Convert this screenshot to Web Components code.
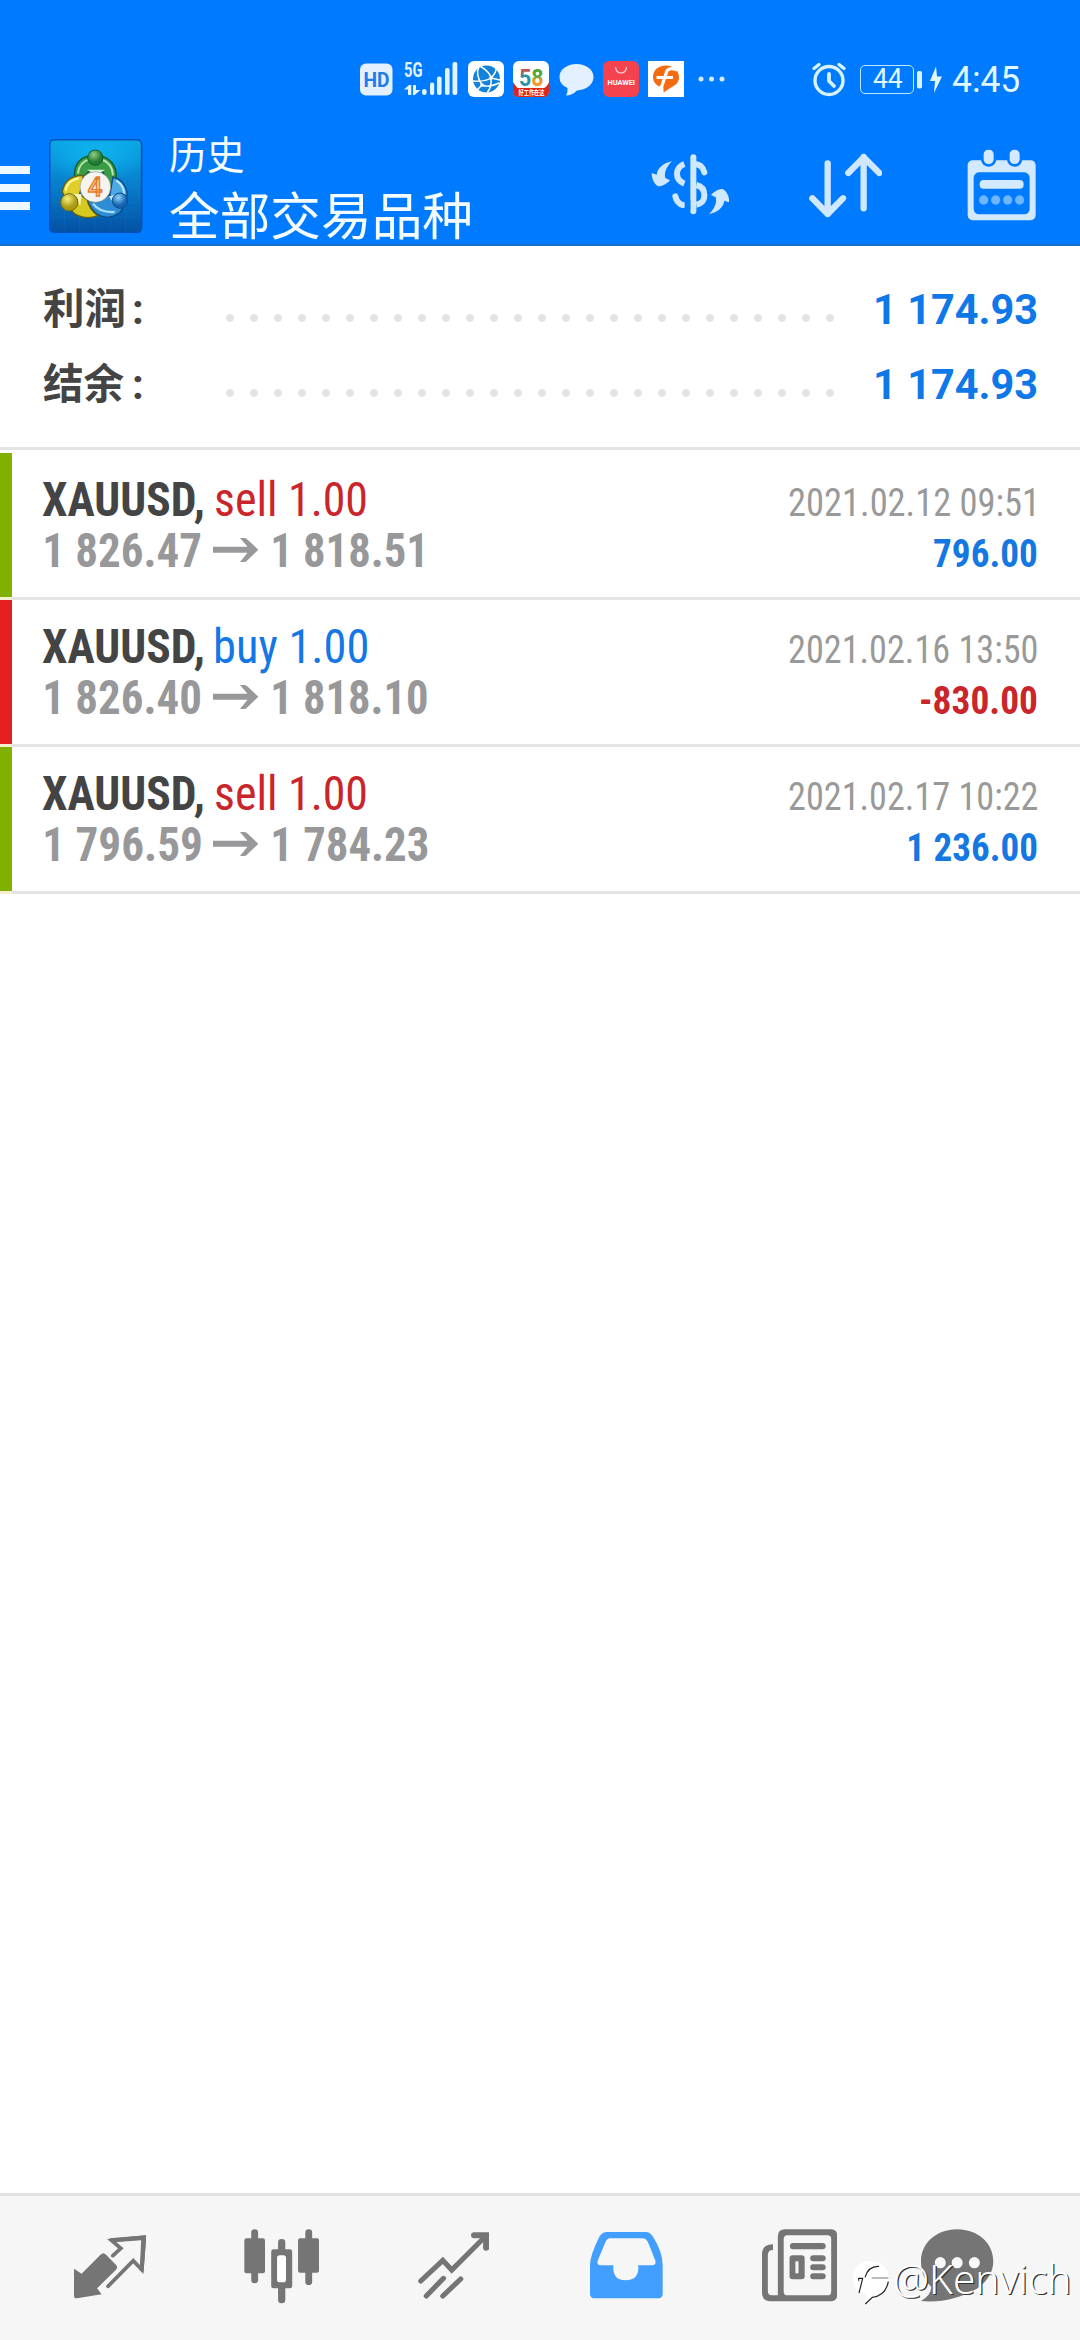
<!DOCTYPE html>
<html lang="zh-CN">
<head>
<meta charset="utf-8">
<title>历史</title>
<style>
html,body{margin:0;background:#fff}
body{width:1080px;height:2340px;overflow:hidden;font-family:Roboto,"Noto Sans CJK SC",sans-serif}
</style>
</head>
<body>
<history-app></history-app>
<script>
const define=(name,html,init)=>customElements.define(name,class extends HTMLElement{
  connectedCallback(){
    if(!this.shadowRoot){
      const t=document.createElement('template');
      t.innerHTML=typeof html==='function'?html(this):html;
      this.attachShadow({mode:'open'}).append(t.content.cloneNode(true));
    }
    if(init)init(this);
  }
});

/* Sets its text in a box whose width is the ink width given in "w". */
const pen=document.createElement('canvas').getContext('2d');
define('fit-text',`<style>:host{display:block;flex:none;white-space:pre}span{display:inline-block;transform-origin:0 0}</style><span><slot></slot></span>`,el=>{
  const c=getComputedStyle(el),w=+el.getAttribute('w');
  pen.font=`${c.fontWeight} ${c.fontSize} ${c.fontFamily}`;
  const m=pen.measureText(el.textContent);
  const s=w/(m.actualBoundingBoxLeft+m.actualBoundingBoxRight);
  el.style.width=w+'px';
  el.shadowRoot.querySelector('span').style.transform=`translateX(${m.actualBoundingBoxLeft*s}px) scaleX(${s})`;
});

define('status-bar',`<style>
:host{display:flex;height:120px;box-sizing:border-box;padding:61px 0 0 360px;align-items:flex-start;color:#e2f8ff}
svg{flex:none;display:block;height:36px;overflow:visible}
fit-text{line-height:36px}
.bat{box-sizing:border-box;width:54px;height:29px;border:1.5px solid #bfe6ff;border-radius:5px;margin:4px 0 0 14px;padding-left:11.5px;font-size:27px}
.bat fit-text{line-height:26px}
.time{font-size:37px;margin:1px 0 0 10px}
</style>
<svg width="33" viewBox="0 0 33 36"><rect y="2.5" width="32.5" height="32" rx="6" fill="#e3f0ff"/><text x="3.5" y="26" font-family="Roboto" font-weight="700" font-size="20" textLength="26" lengthAdjust="spacingAndGlyphs" fill="#1f7be8">HD</text></svg>
<svg width="54" viewBox="0 0 54 36" style="margin-left:11px"><text x="0" y="15.5" font-family="Roboto" font-weight="700" font-size="20" textLength="18.500" lengthAdjust="spacingAndGlyphs" fill="#e3f3ff">5G</text><g fill="#e3f3ff"><rect x="18" y="28" width="4.6" height="6" rx="2.2"/><rect x="26" y="21.5" width="4.2" height="12.5" rx="2"/><rect x="33" y="15.500" width="4.600" height="18.500" rx="2"/><rect x="41" y="7" width="4.600" height="27" rx="2"/><rect x="48.500" y="1" width="4.800" height="33" rx="2"/><path d="M0 28.500l5-4.500h2.300v10H4V28.500ZM9 24h3v5H16.500L10.600 34H9Z"/></g></svg>
<svg width="36" viewBox="0 0 36 36" style="margin-left:9.500px"><rect width="36" height="36" rx="6" fill="#fff"/><circle cx="18.500" cy="18" r="13.500" fill="#1282dd"/><g fill="none" stroke="#fff" stroke-width="1.500"><path d="M12 5Q22 11 23 17Q24 26 19 32M5 20Q17 21 23 17Q28 12 28 8M11 6Q7 13 14 24Q20 27 31 22M14 24L9 29M23 17L32 19"/></g><circle cx="23" cy="17" r="1.800" fill="#fff"/><circle cx="14" cy="24" r="1.800" fill="#fff"/></svg>
<svg width="36" viewBox="0 0 36 36" style="margin-left:9px"><defs><linearGradient id="d" x2="0" y2="1"><stop offset=".2" stop-color="#e2483a"/><stop offset=".45" stop-color="#2b93a8"/></linearGradient><linearGradient id="e" x2="0" y2="1"><stop offset=".45" stop-color="#55a63a"/><stop offset=".6" stop-color="#f29a26"/></linearGradient></defs><rect width="36" height="36" rx="6" fill="#fff"/><text x="6" y="24.500" font-family="Roboto" font-weight="700" font-size="24" textLength="24.500" lengthAdjust="spacingAndGlyphs"><tspan fill="url(#d)">5</tspan><tspan fill="url(#e)">8</tspan></text><path d="M0 21Q4 27 5 27h26q3-1 5-6v9q0 6-6 6H6q-6 0-6-6Z" fill="#dc2419"/><text x="5.500" y="34" font-family="Noto Sans CJK SC" font-weight="700" font-size="7" textLength="26" lengthAdjust="spacingAndGlyphs" fill="#fff">好工作在这</text></svg>
<svg width="35" viewBox="0 0 35 36" style="margin-left:10.500px"><path d="M17.500 3C27 3 34.500 8.500 34.500 16S27 29 18 29.500Q13 34.500 7 34.500Q9 31 8.500 27Q.5 23.500.5 16C.5 8.500 8 3 17.500 3Z" fill="#e3f0ff"/></svg>
<svg width="36" viewBox="0 0 36 36" style="margin-left:8.500px"><rect width="36" height="36" rx="6" fill="#f4434e"/><path d="M12.500 6q.5 6 5.500 6t5.500-6" fill="none" stroke="#ffd9dc" stroke-width="1.200"/><text x="4.500" y="23.500" font-family="Roboto" font-weight="700" font-size="6.500" textLength="27.500" lengthAdjust="spacingAndGlyphs" fill="#fff">HUAWEI</text></svg>
<svg width="36" viewBox="0 0 36 36" style="margin-left:9px"><path fill="#fff" d="M0 0h36v36H0z"/><path d="M18 4.500C26 4.500 31 10 31 16.500C31 22 27 24.500 23 26.500L15.500 31.500V26.500C9 26 5 21 5 16C5 9.500 10 4.500 18 4.500Z" fill="#f36c12"/><path d="M29 9Q19 5 18 13L12.500 29M8.500 16.500H25" fill="none" stroke="#fff" stroke-width="3.200"/></svg>
<svg width="27" viewBox="0 0 27 36" style="margin-left:14px"><g fill="#d6ebff"><circle cx="3" cy="18" r="2.500"/><circle cx="13.500" cy="18" r="2.500"/><circle cx="24" cy="18" r="2.500"/></g></svg>
<svg width="34" viewBox="0 0 34 36" style="margin-left:87.500px"><g fill="none" stroke="#d6f3ff" stroke-width="3.400" stroke-linecap="round"><circle cx="17" cy="19.500" r="14"/><path d="M2 7.500L7 3.500M27 3.500L32 7.500"/><path d="M17 13v7l5 5" stroke-width="3.800" stroke-linejoin="round"/></g></svg>
<div class="bat"><fit-text w="29.500">44</fit-text></div>
<svg width="5" viewBox="0 0 5 36" style="margin-left:3px"><rect y="10" width="5" height="17.500" rx="1.800" fill="#d6f3ff"/></svg>
<svg width="12" viewBox="0 0 12 36" style="margin-left:7.500px"><path d="M6 5.500L0 20H5L4 32L12 15.500H7Z" fill="#e2f8ff"/></svg>
<div class="time"><fit-text w="67.500">4:45</fit-text></div>`);

define('title-bar',`<style>
:host{display:flex;align-items:flex-start;height:126px;box-sizing:border-box;border-bottom:2.500px solid #1a6fcd;color:#f4fcff}
svg{display:block;flex:none}
.menu{display:flex;flex-direction:column;gap:10px;padding-top:46px;width:30px}
.menu i{height:8px;background:#eef8ff}
.logo{margin:18.700px 0 0 19.300px}
.t{padding-top:14px;margin-left:27.300px;width:300px}
.a{font-size:38.500px;line-height:44px}.b{font-size:51px;line-height:60px;margin-top:10px}
.act{display:flex;padding-top:26.700px;margin-left:180.700px}
</style>
<div class="menu"><i></i><i></i><i></i></div>
<svg class="logo" width="93.300" height="94" viewBox="148 56 280 282">
<defs><linearGradient id="bg" x2="0" y2="1"><stop stop-color="#08a5e6"/><stop offset=".5" stop-color="#087dcb"/><stop offset="1" stop-color="#0451a4"/></linearGradient>
<radialGradient id="gl" cx=".5" cy=".25" r=".6"><stop stop-color="#10b4ee"/><stop offset="1" stop-color="#10b4ee" stop-opacity="0"/></radialGradient>
<radialGradient id="g" cx=".4" cy=".3"><stop stop-color="#8fce86"/><stop offset="1" stop-color="#237a33"/></radialGradient>
<radialGradient id="y" cx=".4" cy=".3"><stop stop-color="#fbf07c"/><stop offset="1" stop-color="#a89a14"/></radialGradient>
<radialGradient id="b" cx=".4" cy=".3"><stop stop-color="#8fd4fa"/><stop offset="1" stop-color="#1565b4"/></radialGradient></defs>
<rect x="150" y="58" width="276" height="278" rx="14" fill="url(#bg)" stroke="#0752b4" stroke-width="5"/>
<rect x="153" y="61" width="270" height="150" rx="12" fill="url(#gl)"/>
<path d="M194 64v268M240 64v268M286 64v268M332 64v268M378 64v268M154 108h268M154 154h268M154 200h268M154 246h268M154 290h268" stroke="#3ab5f0" stroke-opacity=".13" stroke-width="2"/>
<g stroke-linejoin="round">
<path d="M224 165C224 130 245 108 270 108H305C330 112 350 135 350 168Q350 195 330 208L312 190Q320 165 305 150L290 162L272 150Q258 160 250 175Q230 175 224 165Z" fill="#3b9a45" stroke="#145b2b" stroke-width="4"/>
<path d="M235 160Q238 125 270 117M310 119Q338 130 340 165" fill="none" stroke="#b7e5ac" stroke-width="6"/>
<path d="M262 148H316L290 165Z" fill="#d9f5d8"/>
<path d="M340 170Q375 180 382 215Q384 235 370 245L330 228Z" fill="#4ca9e4" stroke="#0b4b8d" stroke-width="4"/>
<path d="M350 180Q374 196 373 222" fill="none" stroke="#b9e7ff" stroke-width="6"/>
<path d="M262 235L330 225L370 262Q362 285 325 291Q280 290 262 235Z" fill="#2d8cd4" stroke="#0b4b8d" stroke-width="4"/>
<path d="M280 250Q300 278 345 275" fill="none" stroke="#a5defc" stroke-width="7"/>
<path d="M250 165Q195 166 188 215L200 240L238 225L248 195Z" fill="#e0cf28" stroke="#665f0c" stroke-width="4"/>
<path d="M198 212Q202 180 238 174" fill="none" stroke="#fff8a5" stroke-width="6"/>
<path d="M215 265L245 225L262 238Q270 270 295 286Q265 298 238 287Q218 280 215 265Z" fill="#d6c91f" stroke="#665f0c" stroke-width="4"/>
<path d="M214 220L246 222L242 256Z" fill="#fbf7b4"/><path d="M328 228L352 222L342 250Z" fill="#c4ebff"/></g>
<circle cx="287" cy="112" r="23" fill="url(#g)" stroke="#145b2b" stroke-width="3"/>
<circle cx="209" cy="246" r="26" fill="url(#y)" stroke="#70690c" stroke-width="3"/>
<circle cx="361" cy="241" r="23" fill="url(#b)" stroke="#0b4b8d" stroke-width="3"/>
<circle cx="287" cy="200" r="46" fill="#f7f3ef" stroke="#777" stroke-width="1.500"/>
<text x="264" y="226" font-family="Roboto" font-size="78" font-weight="500" textLength="44" lengthAdjust="spacingAndGlyphs" fill="#fbd3a6" stroke="#e47b28" stroke-width="4">4</text>
</svg>
<div class="t"><fit-text class="a" w="74">历史</fit-text><fit-text class="b" w="300">全部交易品种</fit-text></div>
<div class="act">
<svg width="78.700" height="76.700" viewBox="62 50 236 230"><g fill="#cfe8ff"><rect x="180" y="72" width="18" height="180" rx="9"/><path d="M125 93C100 98 82 112 79 133L64 128C64 145 72 162 84 168C98 168 110 160 119 150L105 143C100 125 112 105 125 93Z"/><path d="M236 251C261 246 279 232 282 211L297 216C297 199 289 182 277 176C263 176 251 184 242 194L256 201C261 219 249 239 236 251Z"/></g><g fill="none" stroke="#cfe8ff" stroke-width="18"><path d="M162 101Q140 109 140 131Q140 151 162 160"/><path d="M196 101Q217 104 222 126M135 198Q140 220 158 224" stroke-linecap="round"/><path d="M198 164C215 168 222 180 222 195C222 211 212 221 198 223"/></g><path d="M163 210h17v28h-17z" fill="#007aff"/></svg>
<svg width="73.300" height="76.700" viewBox="538 50 220 230" style="margin-left:79.900px"><g fill="none" stroke="#cfe8ff" stroke-width="19" stroke-linecap="round" stroke-linejoin="round"><path d="M594 99V251M548 204L594 251L640 204M702 234V80M656 128L702 81L749 128"/></g></svg>
<svg width="69.300" height="76.700" viewBox="1012 50 208 230" style="margin-left:84.700px"><rect x="1014" y="90" width="204" height="180" rx="15" fill="#d2e9ff"/><rect x="1032" y="126" width="168" height="126" rx="16" fill="#007aff"/><g fill="#d2e9ff" stroke="#007aff" stroke-width="8"><rect x="1058" y="54" width="38" height="51" rx="18"/><rect x="1136" y="54" width="38" height="51" rx="18"/></g><rect x="1050" y="149" width="132" height="26" rx="12" fill="#d2e9ff"/><g fill="#6fb6ff"><circle cx="1062" cy="209" r="14"/><circle cx="1098" cy="209" r="14"/><circle cx="1134" cy="209" r="14"/><circle cx="1170" cy="209" r="14"/></g></svg>
</div>`);

define('summary-row',el=>`<style>
:host{display:flex;align-items:center;height:75px;line-height:75px;font-size:42px;font-weight:700;padding:0 43.400px 0 43px}
.l{color:#444;width:175px;display:flex;flex:none}.l fit-text+fit-text{margin-left:10px}
.d{flex:none;width:624px;height:8px;margin-top:16px;background:radial-gradient(circle,#e3e3e3 3.500px,transparent 4.200px) 0 0/24px 8px}
.v{color:#0f78e8;margin-left:auto}
</style><div class="l"><fit-text w="81">${el.getAttribute('label')}</fit-text><fit-text w="8">:</fit-text></div><div class="d"></div><fit-text class="v" w="161">${el.getAttribute('value')}</fit-text>`);

define('deal-row',el=>{const a=n=>el.getAttribute(n);return `<style>
:host{display:flex;height:147px;box-sizing:border-box;font-family:"Roboto Condensed",Roboto,sans-serif;background:linear-gradient(90deg,#f3efcf 12px,#e4e4e4 12px) 0 144px/100% 3px no-repeat}
.bar{width:12px;height:144px;background:${a('bar')}}
.m{padding-top:21px;margin-left:30.400px;font-size:48px;line-height:51px}
.m div{display:flex}
.s{font-weight:700;color:#444}.k{color:${a('kind')[0]==='b'?'#1577e6':'#c9252b'};margin-left:13.600px}
.p{font-weight:700;color:#98989b;padding-left:2.300px}
svg{margin:13.300px 14.500px 0 13px;flex:none;width:45.300px;height:24px}
.e{margin-left:auto;padding:24px 43.400px 0 0;font-size:39.500px;line-height:51px;display:flex;flex-direction:column;align-items:flex-end}
.d{color:#999;margin-right:${248-a('dw')}px}.v{font-weight:700;color:${a('value')[0]==='-'?'#c9252b':'#1577e0'}}
</style><div class="bar"></div>
<div class="m"><div><fit-text class="s" w="160.300">XAUUSD,</fit-text><fit-text class="k" w="${a('kw')}">${a('kind')}</fit-text></div>
<div class="p"><fit-text w="155.800">${a('from')}</fit-text><svg viewBox="0 0 45.300 24"><path d="M0 8.700H34.500L27 0H31.500Q33 0 35 2L45.300 11.700L35 21.800Q33 24 31.500 24H27L34.500 14.700H0Z" fill="#98989b"/></svg><fit-text w="${a('tw')}">${a('to')}</fit-text></div></div>
<div class="e"><fit-text class="d" w="${a('dw')}">${a('date')}</fit-text><fit-text class="v" w="${a('vw')}">${a('value')}</fit-text></div>`});

define('tab-bar',`<style>
:host{display:flex;height:147px;box-sizing:border-box;border-top:3px solid #e1e1e1;background:#f6f6f6;padding:30.700px 0 0 74px;position:relative}
svg{flex:none;display:block;height:80px}
.wm{position:absolute;left:853.300px;top:64px;display:flex;align-items:flex-start;color:#fff;text-shadow:1.200px 1.200px 0 #333}
.wm svg{width:36.700px;height:45px}
.wm fit-text{font:300 41px/58px "Noto Sans",sans-serif;margin:-11px 0 0 5px}
</style>
<svg width="72.300" viewBox="215 140 210 240" preserveAspectRatio="none" fill="#757575"><path d="M215 265L237 280L292 223Q300 214 308 223L338 255Q343 261 337 268L282 324L295 342L224 354Q215 355 215 346Z"/><path d="M328 226L351 204L324 180L419 171L412 268L387 241L314 318" fill="none" stroke="#757575" stroke-width="11" stroke-linecap="round"/><path d="M318 174L425 165L417 275L406 271L410 180L330 186Z"/></svg>
<svg width="75.400" viewBox="708 140 219 240" preserveAspectRatio="none" style="margin-left:97.500px" fill="#757575"><rect x="729" y="147" width="20" height="162" rx="10"/><rect x="709" y="174" width="60" height="105" rx="6"/><rect x="807" y="176" width="21" height="193" rx="10"/><rect x="787" y="207" width="61" height="117" rx="7"/><rect x="804" y="225" width="26" height="81" rx="8" fill="#fff"/><rect x="886" y="147" width="20" height="167" rx="10"/><rect x="865" y="174" width="61" height="103" rx="6"/></svg>
<svg width="71.300" viewBox="1213 140 207 240" preserveAspectRatio="none" style="margin-left:98.500px"><g fill="none" stroke="#757575" stroke-width="15" stroke-linecap="round"><path d="M1221 302L1285 240L1311 269L1409 168M1237 347L1287 294M1285 347L1337 296"/><path d="M1376 165H1411V202" stroke-width="18"/></g></svg>
<svg width="72.700" viewBox="146 140 211 240" preserveAspectRatio="none" style="margin-left:101.300px"><path fill="#429eff" d="M195 155H308Q320 155 328 168Q357 215 357 255V340Q357 354 342 354H161Q146 354 146 340V255Q146 225 174 168Q182 155 195 155Z"/><path fill="#f6f6f6" d="M205 174H298Q309 174 315 187L336 242Q338 255 326 255H286Q290 300 249 300Q210 300 214 255H178Q165 255 168 242L190 187Q195 174 205 174Z"/></svg>
<svg width="75.400" viewBox="645 140 219 240" preserveAspectRatio="none" style="margin-left:99.100px"><path fill="#757575" d="M712 147H844Q864 147 864 168V341Q864 363 844 363H667Q645 360 645 338V222Q645 192 677 192V209Q662 209 662 225V333Q662 345 674 345H691V168Q691 147 712 147Z"/><rect x="708" y="165" width="138" height="180" rx="11" fill="#f6f6f6"/><g fill="#757575"><rect x="726" y="188" width="104" height="19" rx="9"/><rect x="725" y="225" width="44" height="72" rx="9"/><rect x="785" y="225" width="45" height="18" rx="9"/><rect x="785" y="252" width="45" height="18" rx="9"/><rect x="785" y="279" width="45" height="18" rx="9"/></g><path fill="#f6f6f6" d="M742 243h9v36h-9z"/></svg>
<svg width="72.300" viewBox="1108 140 210 240" preserveAspectRatio="none" style="margin-left:84px"><path fill="#757575" d="M1213 147C1274 147 1318 189 1318 243C1318 276 1300 305 1270 325C1220 355 1160 368 1108 362Q1137 345 1138 320C1118 300 1108 275 1108 243C1108 189 1152 147 1213 147Z"/><g fill="#f8f8f8"><ellipse cx="1164" cy="247" rx="16" ry="17"/><ellipse cx="1213" cy="247" rx="16" ry="17"/><ellipse cx="1263" cy="247" rx="16" ry="17"/></g></svg>
<div class="wm"><svg viewBox="40 105 110 135"><path fill="#fff" d="M92 108C124 108 147 128 147 158C147 190 122 212 82 236L76 226L82 208C58 205 40 185 40 158C40 130 62 108 92 108Z"/><g fill="none" stroke="#222" stroke-width="3.500"><path d="M146 170C140 200 122 214 98 217L77 237M58 204L69 160H57V167M76 157Q86 122 118 124"/><path d="M96 159H146" stroke="#777" stroke-width="3"/></g></svg><fit-text w="174">@Kenvich</fit-text></div>`);

define('history-app',`<style>
:host{display:flex;flex-direction:column;width:1080px;height:2340px;background:#fff;overflow:hidden}
header{background:#007aff;height:246px;flex:none}
.sum{height:204px;box-sizing:border-box;padding-top:26px;border-bottom:3px solid #e4e4e4;flex:none}
.list{padding-top:3px;flex:1}
</style>
<header><status-bar></status-bar><title-bar></title-bar></header>
<section class="sum"><summary-row label="利润" value="1 174.93"></summary-row><summary-row label="结余" value="1 174.93"></summary-row></section>
<section class="list">
<deal-row bar="#80b000" kind="sell 1.00" kw="149.400" from="1 826.47" to="1 818.51" tw="149" date="2021.02.12 09:51" dw="245" value="796.00" vw="103"></deal-row>
<deal-row bar="#e3201f" kind="buy 1.00" kw="150.800" from="1 826.40" to="1 818.10" tw="154.300" date="2021.02.16 13:50" dw="248" value="-830.00" vw="116"></deal-row>
<deal-row bar="#80b000" kind="sell 1.00" kw="149.400" from="1 796.59" to="1 784.23" tw="154.300" date="2021.02.17 10:22" dw="248" value="1 236.00" vw="128"></deal-row>
</section>
<tab-bar></tab-bar>`);
</script>
</body>
</html>
